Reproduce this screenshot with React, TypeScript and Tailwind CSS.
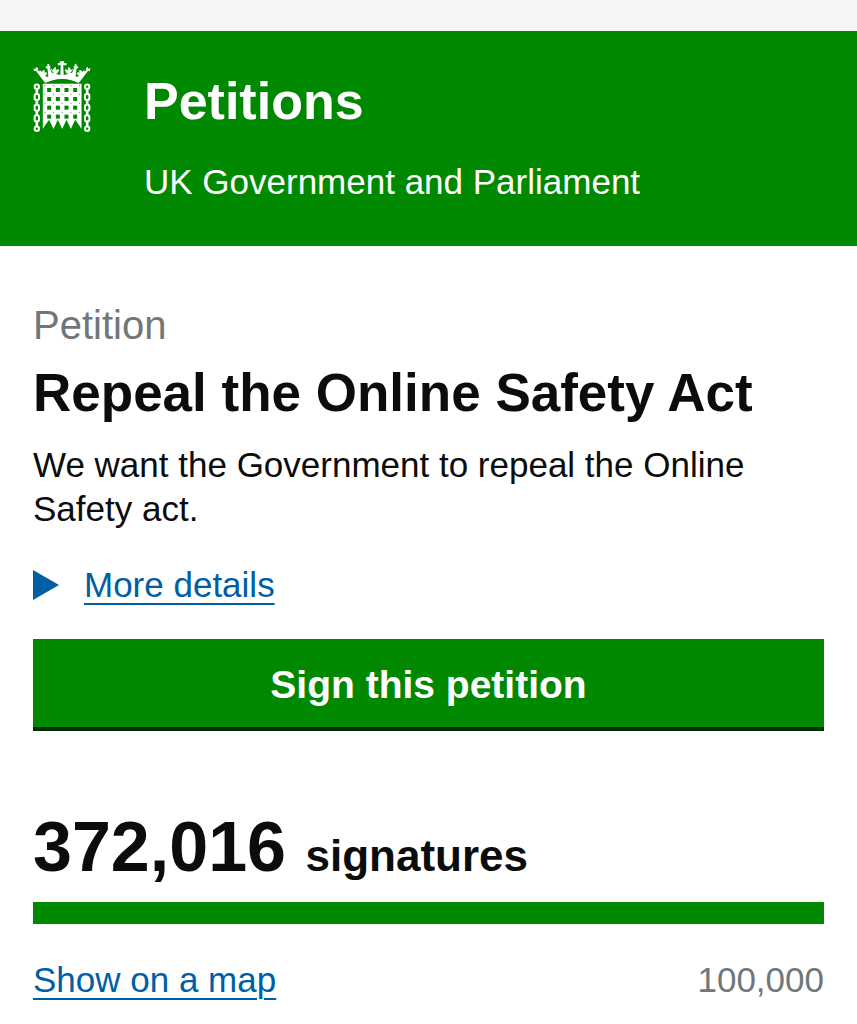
import { useState } from "react";

const holeCols = [86, 112, 138, 164];
const holeRows = [120, 147, 173, 200];
const rivetCols = [73, 99, 125, 151, 177];
const rivetRows = [107, 133, 160, 187];
const linkRows = [110, 141, 173, 205, 236];

const Chain = ({ x }: { x: number }) => (
  <g fill="none" stroke="#fff" strokeWidth="6">
    {linkRows.map((y, i) =>
      i === 0 || i === linkRows.length - 1 ? (
        <circle key={y} cx={x} cy={y} r="6.5" />
      ) : (
        <rect key={y} x={x - 6.5} y={y - 9} width="13" height="18" rx="5" />
      )
    )}
    {[125, 157, 189, 221].map((y) => (
      <path key={y} d={`M${x} ${y - 7}v14`} strokeWidth="8" />
    ))}
  </g>
);

// One side of the crown, mirrored for the other
const CrownHalf = () => (
  <g fill="#fff">
    <path d="M39 54L44 57L48 51L53 55L51 60L80 84L75 99L67 90L46 62L41 64Z" />
    <path d="M76 48L80 50L81 41L86 42L87 49L91 50L88 55L100 80L84 84L81 56L76 54Z" />
    <path d="M56 62Q62 61 64 66Q68 58 73 61L72 68L77 66L80 72L73 79L82 81L72 87L60 76Z" />
    <path d="M90 56Q96 56 97 61Q101 50 106 51L106 61Q113 55 116 60Q114 69 106 72L119 75V82L98 82L91 68L100 70Z" />
  </g>
);

const Portcullis = () => (
  <svg
    viewBox="38 33 173 213"
    className="w-[58px] h-[71px] shrink-0"
    role="img"
    aria-label="UK Parliament portcullis"
  >
    {/* Crown */}
    <CrownHalf />
    <g transform="translate(249 0) scale(-1 1)">
      <CrownHalf />
    </g>
    <path
      fill="#fff"
      d="M118 34H131V39H138V46H128L130 78H119L121 46H112V39H118ZM68 83Q125 66 181 83L174 99Q125 76 75 99Z"
    />
    <path fill="#008800" d="M76 99Q125 75 173 99Z" />
    {/* Grille */}
    <path
      fill="#fff"
      d="M67 101H183V237L177 227L164 209L151 237L138 209L125 237L112 209L99 237L86 209L73 227L67 237Z"
    />
    <g fill="#008800">
      {holeRows.map((y) =>
        holeCols.map((x) => (
          <rect key={`${x}-${y}`} x={x - 6} y={y - 6} width="12" height="12" />
        ))
      )}
    </g>
    <g fill="#008800" opacity="0.7">
      {rivetRows.map((y) =>
        rivetCols.map((x) => (
          <circle key={`${x}-${y}`} cx={x} cy={y} r="2" />
        ))
      )}
    </g>
    <Chain x={49} />
    <Chain x={200} />
  </svg>
);

const Header = () => (
  <header className="bg-[#008800] text-white flex items-start gap-[53px] px-[33px] pt-[30px] pb-[42px]">
    <a href="#home">
      <Portcullis />
    </a>
    <div>
      <a href="#petitions" className="block text-[52px] leading-[80px] font-bold">
        Petitions
      </a>
      <p className="mt-[19px] text-[35px] leading-[44px]">
        UK Government and Parliament
      </p>
    </div>
  </header>
);

const linkStyle =
  "text-[#005ea5] text-[35px] leading-[44px] underline decoration-2 underline-offset-[6px]";

const App = () => {
  const [open, setOpen] = useState(false);

  return (
    <div className="min-h-screen bg-white text-[#0b0c0c] font-['Liberation_Sans',Arial,sans-serif]">
      <div className="h-[31px] bg-[#f5f5f5]" />
      <Header />

      <main className="px-[33px] pt-[55px] pb-4">
        <h1>
          <span className="block text-[40px] leading-[48px] text-[#6f777b]">
            Petition
          </span>
          <span className="block mt-3 text-[53px] leading-[64px] font-bold">
            Repeal the Online Safety Act
          </span>
        </h1>
        <p className="mt-[18px] text-[35px] leading-[44px]">
          We want the Government to repeal the Online Safety act.
        </p>

        <button
          type="button"
          aria-expanded={open}
          onClick={() => setOpen(!open)}
          className="mt-8 flex items-center gap-[25px] cursor-pointer"
        >
          <svg viewBox="0 0 26 30" className="w-[26px] h-[30px]" aria-hidden="true">
            <path d="M0 0L26 15L0 30Z" fill="#005ea5" />
          </svg>
          <span className={linkStyle}>More details</span>
        </button>

        <button
          type="button"
          className="mt-8 w-full bg-[#008800] border-b-4 border-[#002d00] pt-[22px] pb-[18px] text-white text-[39px] leading-[48px] font-bold cursor-pointer"
        >
          Sign this petition
        </button>

        {/* Signature count */}
        <p className="mt-[72px] font-bold text-[70px] leading-[88px]">
          372,016 <span className="text-[44px]">signatures</span>
        </p>
        <div
          role="progressbar"
          aria-label="Signatures"
          aria-valuenow={100}
          className="mt-[2px] h-[22px] bg-[#008800]"
        />
        <div className="mt-[34px] flex items-center justify-between">
          <a href="#map" className={linkStyle}>
            Show on a map
          </a>
          <span className="text-[35px] leading-[44px] text-[#6f777b]">100,000</span>
        </div>
      </main>
    </div>
  );
};

export default App;
